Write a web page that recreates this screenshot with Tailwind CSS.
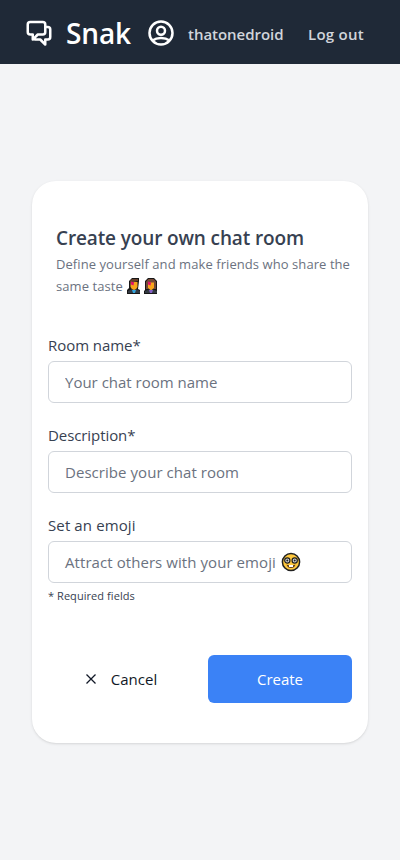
<!DOCTYPE html>
<html lang="en">
<head>
<meta charset="utf-8">
<title>Snak</title>
<script src="https://cdn.jsdelivr.net/npm/@tailwindcss/browser@4"></script>
</head>
<body class="h-[860px] bg-[#f3f4f6] font-['Open_Sans','Noto_Sans',sans-serif] text-[15px] flex flex-col overflow-hidden">
<header class="h-16 bg-[#1f2937] text-white flex items-center shrink-0 pl-6 pt-0.5">
  <svg class="mb-0.5 w-[30px] h-[30px] shrink-0" viewBox="0 0 24 24" fill="none" stroke="currentColor" stroke-width="2" stroke-linecap="round" stroke-linejoin="round"><path d="M17 8h2a2 2 0 0 1 2 2v6a2 2 0 0 1-2 2h-2v4l-4-4H9a1.994 1.994 0 0 1-1.414-.586m0 0L11 14h4a2 2 0 0 0 2-2V6a2 2 0 0 0-2-2H5a2 2 0 0 0-2 2v6a2 2 0 0 0 2 2h2v4l.586-.586z"/></svg>
  <span class="ml-3 w-[66px] text-[28px] leading-9 font-semibold tracking-[-0.1px] whitespace-nowrap">Snak</span>
  <svg class="ml-[15px] w-[28px] h-[28px] shrink-0" viewBox="0 0 28 28" fill="none" stroke="currentColor" stroke-width="2.500"><circle cx="14" cy="14" r="11.500"/><circle cx="14" cy="11.700" r="4"/><path d="M5.500 21.500c2.300-1.700 5.200-2.500 8.500-2.500s6.200.8 8.500 2.500"/></svg>
  <span class="ml-[13px] w-24 pt-0.5 font-semibold tracking-[-0.03px] text-[#d1d5db] whitespace-nowrap">thatonedroid</span>
  <span class="ml-6 pt-0.5 font-semibold tracking-[0.25px] text-[#d1d5db] whitespace-nowrap">Log out</span>
</header>
<main class="flex-1 px-8 pt-[117px]">
  <section class="h-[562px] bg-white rounded-3xl shadow px-4 pt-[43px]">
    <div class="pl-2">
      <h1 class="pb-px text-[19px] leading-7 font-semibold tracking-[-0.13px] text-[#374151] whitespace-nowrap">Create your own chat room</h1>
      <p class="text-[13px] leading-[22px] tracking-[0.07px] text-[#6b7280] whitespace-nowrap">Define yourself and make friends who share the<br><span class="flex items-center">same taste
        <svg class="ml-[3px] mb-px w-[16px] h-[17px]" viewBox="0 0 16 17"><path d="M3 11V4l3-3h7v3l-1 8 2 1v4H1v-4Z" fill="#171717"/><path d="M4.500 5h7v5l-2 3h-3l-2-3Z" fill="#f9a51a"/><path d="M4 5V3.500L6 2h6v2L8.500 5 5 7Z" fill="#67412b"/><path d="M5 4.500l3 1-.5 3L5 7.500Z" fill="#e3126b"/><path d="M2 16v-2l4-2 2 1 2-1 4 2v2Z" fill="#343b43"/><path d="M6 13h4l-1 3H7Z" fill="#33a5df"/></svg>
        <svg class="ml-px mb-px w-[16px] h-[17px]" viewBox="0 0 16 17"><path d="M2 13V4l3-3h6l3 3v9v4H1v-3Z" fill="#171717"/><path d="M3 12V4.500L5.500 2h5L13 4.500V12Z" fill="#754936"/><path d="M5 5.500h6v5l-2 2.500H7l-2-2.500Z" fill="#f9a51a"/><path d="M5 4.500l3 1-.5 3L5 7.500Z" fill="#e3126b"/><path d="M2 16v-2l4-1.500 2 .5 2-.5 4 1.500v2Z" fill="#343b43"/><path d="M6 13h4l-1 3H7Z" fill="#8561c5"/></svg>
      </span></p>
    </div>
    <form class="mt-9">
      <label class="block h-[28px] leading-6 tracking-[-0.05px] text-[#374151]">Room name*</label>
      <input class="block w-full h-[42px] rounded-md border border-[#d1d5db] px-4 placeholder:text-[#6b7280] placeholder:opacity-100" placeholder="Your chat room name">
      <label class="block mt-5 h-[28px] leading-6 tracking-[-0.08px] text-[#374151]">Description*</label>
      <input class="block w-full h-[42px] rounded-md border border-[#d1d5db] px-4 tracking-[0.05px] placeholder:text-[#6b7280]" placeholder="Describe your chat room">
      <label class="block mt-5 h-[28px] leading-6 tracking-[0.12px] text-[#374151]">Set an emoji</label>
      <div class="flex items-center w-full h-[42px] rounded-md border border-[#d1d5db] px-4 text-[#6b7280] whitespace-nowrap"><span class="w-[216px] tracking-[0.07px]">Attract others with your emoji</span>
        <svg class="w-5 h-5 shrink-0" viewBox="0 0 20 20"><circle cx="10" cy="10" r="8.600" fill="#ffc83d" stroke="#202020" stroke-width="1.500"/><path d="M5.500 12.500q4.500 2 9 0-1 3.500-4.500 3.500t-4.500-3.500Z" fill="#5b3a1d"/><path d="M8 13h4v2H8z" fill="#fff"/><g fill="#d8d8d8" stroke="#202020" stroke-width="1.200"><circle cx="6.300" cy="8.500" r="2.600"/><circle cx="13.700" cy="8.500" r="2.600"/></g><circle cx="6.300" cy="8.500" r="1" fill="#202020"/><circle cx="13.700" cy="8.500" r="1" fill="#202020"/></svg>
      </div>
      <p class="mt-[5px] text-[11px] leading-4 tracking-[0.06px] text-[#374151]">* Required fields</p>
      <div class="mt-[51px] flex h-12">
        <button type="button" class="w-[144px] pl-0.5 flex items-center justify-center gap-[14px] text-[#111827]"><svg class="w-3 h-3" viewBox="0 0 12 12" fill="none" stroke="currentColor" stroke-width="1.300"><path d="m1.500 1.500 9 9m0-9-9 9"/></svg>Cancel</button>
        <button type="button" class="ml-4 w-[144px] rounded-md bg-[#3b82f6] text-white">Create</button>
      </div>
    </form>
  </section>
</main>
</body>
</html>
